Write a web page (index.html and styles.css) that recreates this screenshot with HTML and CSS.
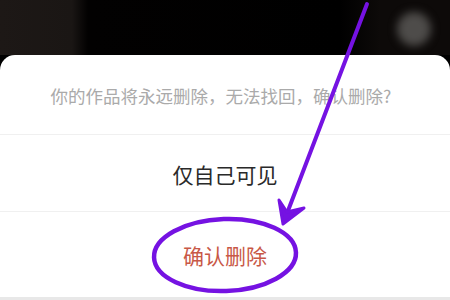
FILE: index.html
```html
<!DOCTYPE html>
<html lang="zh-CN">
<head>
<meta charset="UTF-8">
<meta name="viewport" content="width=device-width, initial-scale=1.0">
<title>删除作品</title>
<link rel="stylesheet" href="styles.css">
</head>
<body>
<div class="screen">
    <div class="topbar">
        <div class="avatar"></div>
    </div>
    <div class="sheet">
        <div class="row message">你的作品将永远删除，无法找回，确认删除?</div>
        <div class="row option">仅自己可见</div>
        <div class="row option danger">确认删除</div>
    </div>
    <div class="footer"></div>

    <svg class="marks" width="450" height="300" viewBox="0 0 450 300">
        <line x1="367" y1="4" x2="286" y2="216" stroke="#7512e2" stroke-width="4" stroke-linecap="round"/>
        <polygon points="283,224 279,200 287,212 304,208" fill="#7512e2" stroke="#7512e2" stroke-width="3" stroke-linejoin="round"/>
        <ellipse cx="225" cy="255" rx="71" ry="36" fill="none" stroke="#7512e2" stroke-width="4.5" transform="rotate(-2 225 255)"/>
    </svg>
</div>
</body>
</html>
```

FILE: styles.css
```css
body {
    margin: 0;
    padding: 0;
    font-family: "Noto Sans CJK SC", "Noto Sans", sans-serif;
    background-color: #000;
}
.screen {
    position: relative;
    width: 450px;
    height: 300px;
    overflow: hidden;
    display: flex;
    flex-direction: column;
}
.topbar {
    height: 55px;
    display: flex;
    align-items: center;
    justify-content: flex-end;
    padding-right: 19px;
    background: linear-gradient(to right, #1d1816 0, #1a1614 72px, #020101 88px, #000 340px, #0d0a09 380px);
}
.avatar {
    width: 34px;
    height: 34px;
    border-radius: 50%;
    background-color: #4e4c4a;
    filter: blur(4px);
    margin-top: 2px;
}
.sheet {
    flex: 1;
    background-color: #fff;
    border-radius: 15px 15px 0 0;
    display: flex;
    flex-direction: column;
}
.row {
    display: flex;
    align-items: center;
    justify-content: center;
    border-bottom: 1px solid #f0f0f0;
}
.message {
    height: 80px;
    padding-top: 2px;
    box-sizing: border-box;
    font-size: 17.5px;
    color: #aaa;
    padding-right: 8px;
}
.option {
    height: 77px;
    padding-top: 2px;
    box-sizing: border-box;
    font-size: 21px;
    color: #2a2a2a;
}
.danger {
    height: 82px;
    padding-top: 4px;
    color: #c85847;
    border-bottom: none;
}
.footer {
    height: 3px;
    background-color: #e8e8e8;
}
.marks {
    position: absolute;
    left: 0;
    top: 0;
    pointer-events: none;
}
```
